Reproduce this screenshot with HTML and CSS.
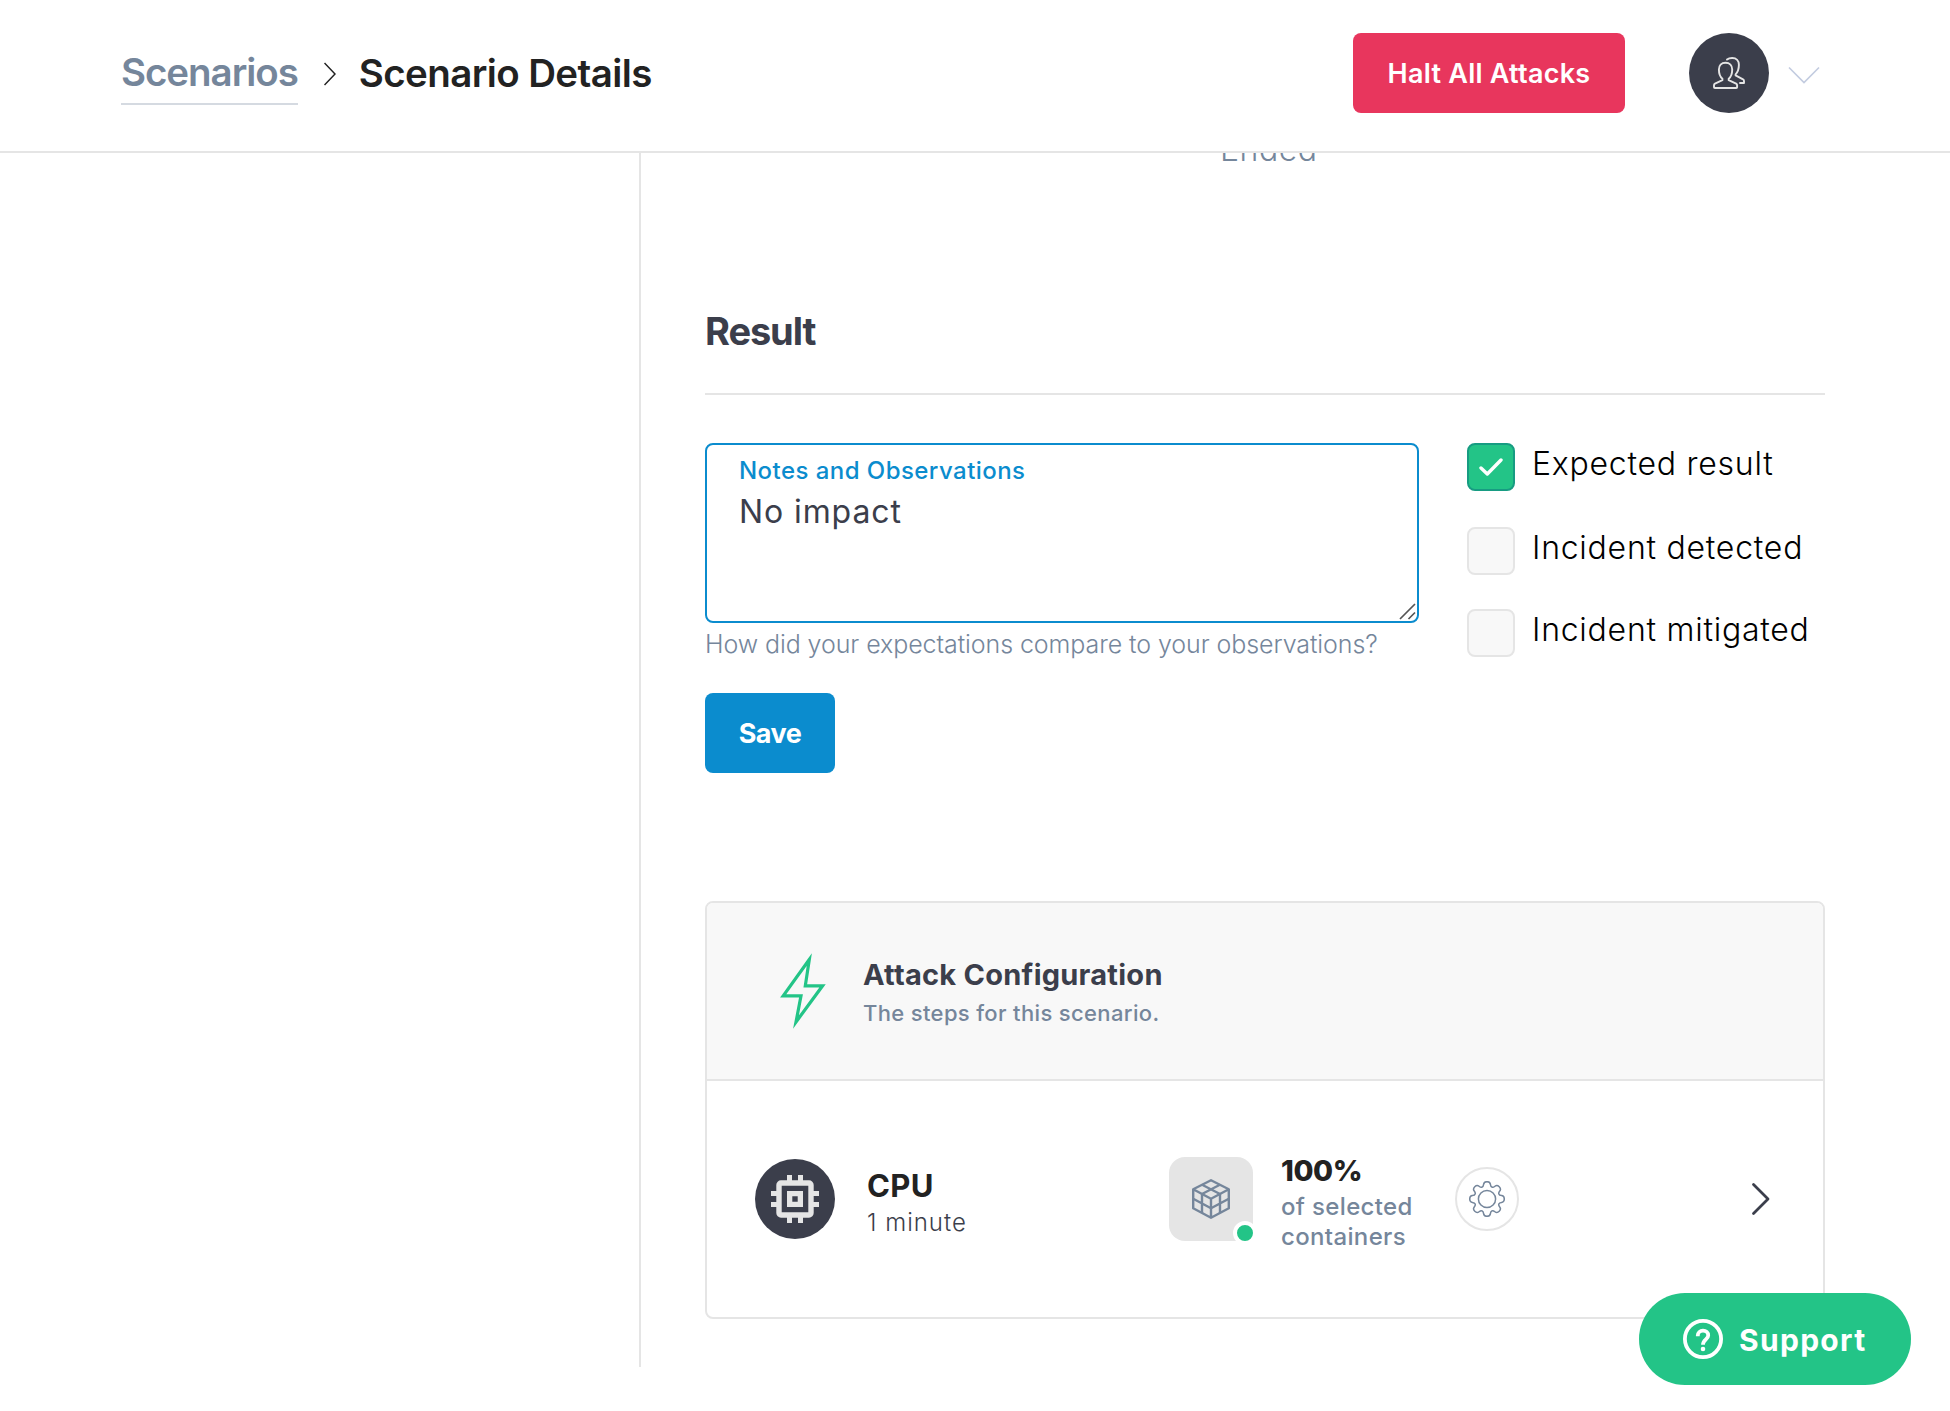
FILE: index.html
```
<!DOCTYPE html>
<html lang="en">
<head>
    <meta charset="UTF-8">
    <meta name="viewport" content="width=device-width, initial-scale=1.0">
    <title>Scenario Details</title>
    <link rel="stylesheet" href="styles.css">
</head>
<body>
    <header class="header">
        <nav class="breadcrumb">
            <a href="#" class="breadcrumb-link">Scenarios</a>
            <svg class="breadcrumb-arrow" width="12" height="24" viewBox="0 0 12 24" fill="none" stroke="#222" stroke-width="1.5">
                <path d="M0.5 1L11 12L0.5 23"/>
            </svg>
            <h1 class="page-title">Scenario Details</h1>
        </nav>
        <button class="halt-button">Halt All Attacks</button>
        <div class="avatar">
            <svg width="32" height="32" viewBox="0 0 32 32" fill="none" stroke="#e5e5e5" stroke-width="1.9" stroke-linejoin="round" stroke-linecap="round">
                <path d="M12.5 5.8C8.3 5.8 5.9 8.7 5.9 12.6C5.9 17 7.2 20 9.4 21.8V23.2L2 26.6C1.3 27 1 27.5 1 28.2V30.2C1 30.8 1.3 31 1.9 31H23.2C23.8 31 24.1 30.8 24.1 30.2V28.2C24.1 27.5 23.8 27 23.1 26.6L15.7 23.2V21.8C17.9 20 19.2 17 19.2 12.6C19.2 8.7 16.7 5.8 12.5 5.8Z"/>
                <path d="M14 2.6C15.5 1.4 17.3 1 19.2 1C23.4 1 25.9 3.9 25.9 7.8C25.9 12 24.7 15.2 22.6 17.3V18.4L30 22.3C30.7 22.7 31 23.2 31 23.9V26H27"/>
            </svg>
        </div>
        <svg class="account-arrow" width="32" height="18" viewBox="0 0 32 18" fill="none" stroke="#c3cce0" stroke-width="1.7">
            <path d="M1 1.5L16 16.5L31 1.5"/>
        </svg>
    </header>

    <div class="page">
        <aside class="sidebar"></aside>

        <main class="content">
            <p class="run-state">Ended</p>

            <h2 class="section-title">Result</h2>

            <div class="result">
                <form class="notes">
                    <div class="notes-field">
                        <label for="notes">Notes and Observations</label>
                        <textarea id="notes">No impact</textarea>
                        <svg class="resizer" width="17" height="17" viewBox="0 0 17 17" fill="none" stroke="#555" stroke-width="1.7">
                            <path d="M1 16L16 1M9.5 16L16 9.5"/>
                        </svg>
                    </div>
                    <p class="notes-help">How did your expectations compare to your observations?</p>
                    <button type="button" class="save-button">Save</button>
                </form>

                <div class="checks">
                    <div class="check">
                        <span class="box checked">
                            <svg width="24" height="18" viewBox="0 0 24 18" fill="none" stroke="#fff" stroke-width="3.4" stroke-linecap="round" stroke-linejoin="round">
                                <path d="M2 10L8.3 16L22 2"/>
                            </svg>
                        </span>
                        <span class="check-label">Expected result</span>
                    </div>
                    <div class="check">
                        <span class="box"></span>
                        <span class="check-label">Incident detected</span>
                    </div>
                    <div class="check">
                        <span class="box"></span>
                        <span class="check-label">Incident mitigated</span>
                    </div>
                </div>
            </div>

            <section class="card">
                <div class="card-header">
                    <svg class="bolt" width="48" height="78" viewBox="0 0 48 78" fill="none" stroke="#23c487" stroke-width="3.2" stroke-miterlimit="10">
                        <path d="M29.3 7.5L3.2 43.9H21L16 70L42.6 33.8H25.3Z"/>
                    </svg>
                    <div>
                        <h3 class="card-title">Attack Configuration</h3>
                        <p class="card-subtitle">The steps for this scenario.</p>
                    </div>
                </div>

                <div class="step">
                    <div class="step-icon">
                        <svg width="48" height="48" viewBox="0 0 48 48" fill="#e5e5e5" fill-rule="evenodd">
                            <path d="M16 0h5v5.3h6V0h5v5.3h6a4.7 4.7 0 0 1 4.7 4.7v6H48v5h-5.3v6H48v5h-5.3v6a4.7 4.7 0 0 1-4.7 4.7h-6V48h-5v-5.3h-6V48h-5v-5.3h-6A4.7 4.7 0 0 1 5.3 38v-6H0v-5h5.3v-6H0v-5h5.3v-6A4.7 4.7 0 0 1 10 5.3h6zM10.7 10.7v26.6h26.6V10.7zM16 16h16v16H16zM21.3 21.3v5.4h5.4v-5.4z"/>
                        </svg>
                    </div>
                    <div class="step-text">
                        <h4 class="step-name">CPU</h4>
                        <p class="step-length">1 minute</p>
                    </div>

                    <div class="target-icon">
                        <svg width="38" height="40" viewBox="0 0 38 40" fill="none" stroke="#75869b" stroke-width="2.4" stroke-linejoin="round">
                            <path d="M19 1.3L36.8 10.3V29.3L19 38.7L1.2 29.3V10.3ZM1.2 10.3L19 19.8L36.8 10.3M19 19.8V38.7"/>
                            <path d="M10.1 5.8L28 15V34M27.9 5.8L10 15V34M1.2 19.8L19 29.2L36.8 19.8"/>
                        </svg>
                        <span class="status-dot"></span>
                    </div>
                    <div class="target-text">
                        <strong class="target-amount">100%</strong>
                        <p class="target-kind">of selected<br>containers</p>
                    </div>

                    <div class="gear">
                        <svg width="36" height="36" viewBox="-18 -18 36 36" fill="none" stroke="#75869b" stroke-width="1.5" stroke-linejoin="round">
                            <circle r="8.6"/>
                            <path id="gear-edge"/>
                        </svg>
                    </div>

                    <svg class="step-arrow" width="20" height="34" viewBox="0 0 20 34" fill="none" stroke="#3b3e4b" stroke-width="2.8" stroke-linecap="round" stroke-linejoin="round">
                        <path d="M2.5 2.5L17 17L2.5 31.5"/>
                    </svg>
                </div>
            </section>
        </main>
    </div>

    <button class="support">
        <svg width="40" height="40" viewBox="0 0 40 40" fill="none" stroke="#fff" stroke-width="3.8">
            <circle cx="20" cy="20" r="18.1"/>
            <path d="M14.8 17.2V16.6C14.8 13.6 17 11.7 20 11.7C23 11.7 25.2 13.6 25.2 16.4C25.2 20.4 20 20.4 20 25.8"/>
            <circle cx="20" cy="30" r="2.3" fill="#fff" stroke="none"/>
        </svg>
        <span>Support</span>
    </button>

    <script>
        // Outline of the gear: eight teeth, one every 45 degrees
        const tooth = [[-5, -11.9], [-3.7, -12.2], [-3.4, -14.6], [-3.1, -17.3], [0, -17.3], [3.1, -17.3], [3.4, -14.6], [3.7, -12.2], [5, -11.9]];
        let edge = '';
        for (let i = 0; i < 8; i++) {
            const a = i * Math.PI / 4;
            const p = tooth.map(([x, y]) => (x * Math.cos(a) - y * Math.sin(a)).toFixed(2) + ' ' + (x * Math.sin(a) + y * Math.cos(a)).toFixed(2));
            edge += `${i ? 'L' : 'M'}${p[0]}Q${p[1]} ${p[2]}Q${p[3]} ${p[4]}Q${p[5]} ${p[6]}Q${p[7]} ${p[8]}`;
        }
        document.getElementById('gear-edge').setAttribute('d', edge + 'Z');
    </script>
</body>
</html>
```
FILE: styles.css
```
* {
    margin: 0;
    padding: 0;
    box-sizing: border-box;
}

body {
    font-family: Inter, "Liberation Sans", sans-serif;
    background: #fff;
    color: #222;
    height: 1411px;
    overflow: hidden;
}

svg {
    display: block;
    flex: none;
}

button {
    font-family: inherit;
    border: none;
    color: #fff;
    cursor: pointer;
}

.header {
    position: relative;
    z-index: 1;
    display: flex;
    align-items: center;
    height: 153px;
    padding: 0 131px 5px 121px;
    background: #fff;
    border-bottom: 2px solid #e5e5e5;
}

.breadcrumb {
    display: flex;
    align-items: center;
    flex: 1;
}

.breadcrumb-link {
    height: 64px;
    border-bottom: 2px solid #d5dae1;
    color: #75869b;
    font-size: 38.5px;
    font-weight: 600;
    line-height: 63px;
    letter-spacing: -1.05px;
    text-decoration: none;
}

.breadcrumb-arrow {
    margin: 2px 23px 0 26px;
}

.page-title {
    font-size: 38.5px;
    font-weight: 600;
    line-height: 61px;
    letter-spacing: -0.6px;
}

.halt-button {
    width: 272px;
    height: 80px;
    padding-top: 1px;
    border-radius: 8px;
    background: #e8365d;
    font-size: 27px;
    font-weight: 600;
    letter-spacing: 0.25px;
}

.avatar {
    display: flex;
    align-items: center;
    justify-content: center;
    width: 80px;
    height: 80px;
    margin: 0 19px 0 64px;
    border-radius: 50%;
    background: #3b3e4b;
}

.account-arrow {
    margin-top: 4px;
    margin-right: -1px;
}

.page {
    display: flex;
    height: 1214px;
}

.sidebar {
    width: 641px;
    border-right: 2px solid #e5e5e5;
}

.content {
    width: 1120px;
    margin-left: 64px;
}

/* scrolled half way under the header */
.run-state {
    margin-top: -23px;
    padding-left: 515px;
    color: #75869b;
    font-size: 32px;
    font-weight: 300;
    line-height: 40px;
    letter-spacing: 0.5px;
}

.section-title {
    margin-top: 137px;
    padding-bottom: 38px;
    border-bottom: 2px solid #e5e5e5;
    color: #3b3e4b;
    font-size: 38px;
    font-weight: 650;
    line-height: 48px;
    letter-spacing: -1.1px;
}

.result {
    display: grid;
    grid-template-columns: 714px 1fr;
    gap: 48px;
    padding-top: 48px;
}

.notes-field {
    position: relative;
    height: 180px;
    padding: 12px 32px 0;
    border: 2px solid #0b8cce;
    border-radius: 8px;
}

.notes-field label {
    display: block;
    color: #0b8cce;
    font-size: 24px;
    font-weight: 500;
    line-height: 28px;
    letter-spacing: 0.45px;
}

.notes-field textarea {
    display: block;
    width: 100%;
    height: 120px;
    margin-top: 7px;
    border: none;
    outline: none;
    resize: none;
    background: none;
    color: #3b3e4b;
    font-family: inherit;
    font-size: 32px;
    line-height: 40px;
    letter-spacing: 0.9px;
}

.resizer {
    position: absolute;
    right: 1px;
    bottom: 1px;
}

.notes-help {
    margin-top: 5px;
    color: #75869b;
    font-size: 25px;
    font-weight: 300;
    line-height: 32px;
    letter-spacing: -0.08px;
}

.save-button {
    display: block;
    width: 130px;
    height: 80px;
    margin-top: 33px;
    border-radius: 8px;
    background: #0b8cce;
    font-size: 27px;
    font-weight: 650;
    letter-spacing: -0.5px;
}

.check {
    display: flex;
    margin-bottom: 34px;
}

.check:first-child {
    margin-bottom: 36px;
}

.box {
    display: flex;
    align-items: center;
    justify-content: center;
    width: 48px;
    height: 48px;
    margin-right: 17px;
    border: 2px solid #e5e5e5;
    border-radius: 8px;
    background: #f8f8f8;
}

.box.checked {
    border-color: #179c82;
    background: #23c487;
}

.check-label {
    padding-top: 1px;
    color: #000;
    font-size: 32px;
    font-weight: 300;
    line-height: 40px;
    letter-spacing: 0.75px;
}

.card {
    height: 418px;
    margin-top: 128px;
    border: 2px solid #e5e5e5;
    border-radius: 8px;
    overflow: hidden;
}

.card-header {
    display: flex;
    align-items: center;
    height: 178px;
    padding-left: 73px;
    background: #f8f8f8;
    border-bottom: 2px solid #e5e5e5;
}

.bolt {
    margin-right: 35px;
}

.card-title {
    margin-top: 4px;
    color: #3b3e4b;
    font-size: 29px;
    font-weight: 700;
    line-height: 36px;
    letter-spacing: 0.25px;
}

.card-subtitle {
    margin-top: 4px;
    color: #75869b;
    font-size: 22px;
    font-weight: 500;
    line-height: 32px;
    letter-spacing: 0.35px;
}

.step {
    display: flex;
    align-items: center;
    height: 236px;
    padding: 0 52px 0 48px;
}

.step-icon {
    display: flex;
    align-items: center;
    justify-content: center;
    width: 80px;
    height: 80px;
    border-radius: 50%;
    background: #3b3e4b;
}

.step-text {
    width: 302px;
    padding: 7px 0 0 32px;
}

.step-name {
    font-size: 31px;
    font-weight: 700;
    line-height: 40px;
    letter-spacing: 0.4px;
}

.step-length {
    margin-top: 1px;
    color: #3b3e4b;
    font-size: 24px;
    font-weight: 300;
    line-height: 32px;
    letter-spacing: 1px;
}

.target-icon {
    position: relative;
    display: flex;
    align-items: center;
    justify-content: center;
    width: 84px;
    height: 84px;
    margin-left: 32px;
    border-radius: 16px;
    background: #e5e5e5;
}

.status-dot {
    position: absolute;
    right: -4px;
    bottom: -4px;
    width: 24px;
    height: 24px;
    border: 4px solid #fff;
    border-radius: 50%;
    background: #23c487;
}

.target-text {
    width: 202px;
    padding: 7px 0 0 28px;
}

.target-amount {
    display: block;
    font-size: 29px;
    font-weight: 800;
    line-height: 36px;
    letter-spacing: -0.4px;
}

.target-kind {
    margin-top: 3px;
    color: #75869b;
    font-size: 24px;
    font-weight: 500;
    line-height: 30px;
    letter-spacing: 0.35px;
}

.gear {
    display: flex;
    align-items: center;
    justify-content: center;
    width: 64px;
    height: 64px;
    border: 2px solid #e5e5e5;
    border-radius: 50%;
}

.step-arrow {
    margin-left: auto;
}

.support {
    position: fixed;
    right: 39px;
    bottom: 26px;
    display: flex;
    align-items: center;
    gap: 16px;
    width: 272px;
    height: 92px;
    padding: 0 0 0 44px;
    border-radius: 46px;
    background: #23c487;
    font-size: 30px;
    font-weight: 700;
    letter-spacing: 1.3px;
}

.support span {
    padding-top: 2px;
}
```
